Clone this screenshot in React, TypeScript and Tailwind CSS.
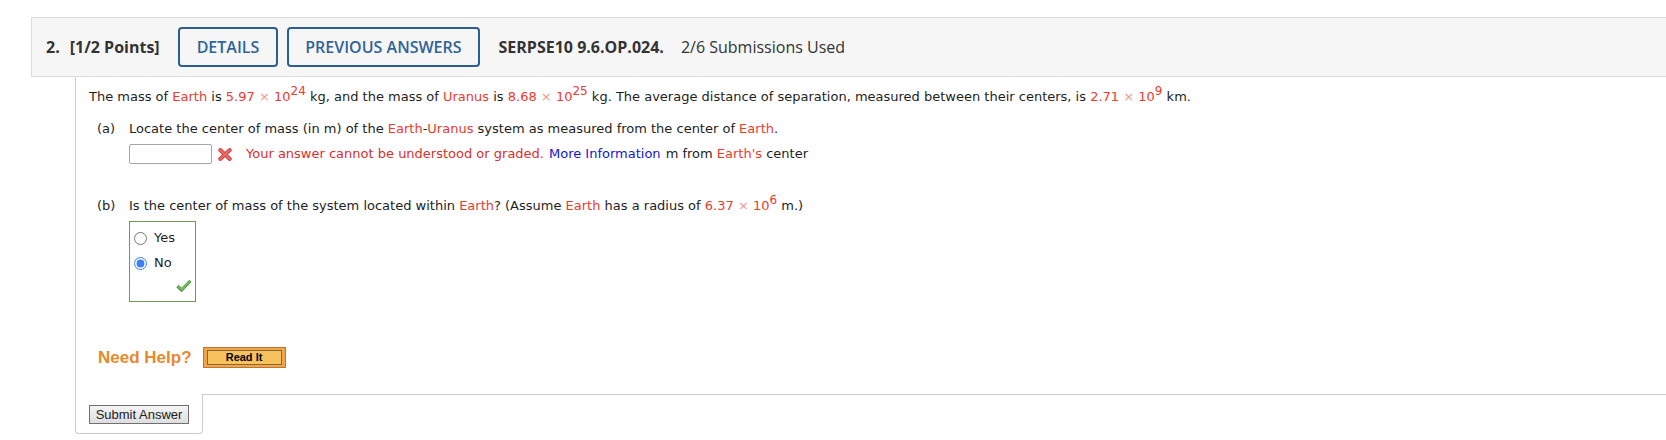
import React from "react";

const Red: React.FC<{ children: React.ReactNode }> = ({ children }) => (
  <span className="text-[#ec3b2f]">{children}</span>
);

const Sci: React.FC<{ m: string; e: string }> = ({ m, e }) => (
  <span className="text-[#ec3b2f]">
    {m} <span className="text-[#f29790]">×</span> 10
    <sup className="text-[12px] top-[-0.5em]">{e}</sup>
  </span>
);

const XMark = () => (
  <svg width="14" height="13" viewBox="0 0 14 13" className="shrink-0">
    <path d="M2.2 2 L11.8 11 M11.8 2 L2.2 11" stroke="#c9403d" strokeWidth="3.8" strokeLinecap="round" />
    <path d="M2.2 2 L11.8 11 M11.8 2 L2.2 11" stroke="#ec6a66" strokeWidth="2.2" strokeLinecap="round" />
  </svg>
);

const Check = () => (
  <svg width="16" height="13" viewBox="0 0 16 13">
    <path d="M1.5 7 L5.5 11 L14.5 1.8" fill="none" stroke="#4f9340" strokeWidth="3.2" strokeLinejoin="round" />
    <path d="M1.8 7 L5.5 10.6 L14.2 2" fill="none" stroke="#78bd62" strokeWidth="1.6" strokeLinejoin="round" />
  </svg>
);

export default function App() {
  return (
    <div className="w-[1666px] h-[440px] overflow-hidden bg-white pt-[17px] pl-[31px]">
      {/* question header */}
      <div className="w-[1660px] h-[60px] border border-[#dcdcdc] bg-[#f6f6f6] flex items-center pl-[14px] text-[16px] text-[#333] font-['Open_Sans',sans-serif]">
        <span className="font-bold">2.</span>
        <span className="font-bold ml-[10px]">[1/2 Points]</span>
        <button className="ml-[18px] h-[40px] px-[17px] border-2 border-[#2c5e90] rounded-[4px] text-[#2f6399] font-semibold">
          DETAILS
        </button>
        <button className="ml-[9px] h-[40px] px-[16px] border-2 border-[#2c5e90] rounded-[4px] text-[#2f6399] font-semibold">
          PREVIOUS ANSWERS
        </button>
        <span className="font-bold ml-[19px]">SERPSE10 9.6.OP.024.</span>
        <span className="ml-[17px]">2/6 Submissions Used</span>
      </div>

      {/* question body */}
      <div className="ml-[44px] w-[1620px] font-['DejaVu_Sans',sans-serif] text-[13px] text-[#1e1e1e]">
        <div className="border-l border-[#cccccc] pl-[13px] pt-[10px] pb-[26px]">
          <p className="leading-[20px]">
            The mass of <Red>Earth</Red> is <Sci m="5.97" e="24" /> kg, and the mass of <Red>Uranus</Red> is{" "}
            <Sci m="8.68" e="25" /> kg. The average distance of separation, measured between their centers, is{" "}
            <Sci m="2.71" e="9" /> km.
          </p>

          <div className="mt-[12px] pl-[8px] flex leading-[20px]">
            <span className="w-[32px] shrink-0">(a)</span>
            <div>
              <p>
                Locate the center of mass (in m) of the <Red>Earth</Red>-<Red>Uranus</Red> system as measured from the
                center of <Red>Earth</Red>.
              </p>
              <div className="mt-[5px] flex items-center">
                <input className="w-[83px] h-[20px] border border-[#a5a5a5] rounded-[2px] bg-white" />
                <span className="ml-[6px]">
                  <XMark />
                </span>
                <span className="ml-[14px] text-[#d8302d]">Your answer cannot be understood or graded.</span>
                <span className="ml-[5px] text-[#1515cf]">More Information</span>
                <span className="ml-[5px]">
                  m from <Red>Earth's</Red> center
                </span>
              </div>
            </div>
          </div>

          <div className="mt-[32px] pl-[8px] flex leading-[20px]">
            <span className="w-[32px] shrink-0">(b)</span>
            <div>
              <p>
                Is the center of mass of the system located within <Red>Earth</Red>? (Assume <Red>Earth</Red> has a
                radius of <Sci m="6.37" e="6" /> m.)
              </p>
              <div className="mt-[5px] w-[67px] h-[81px] border border-[#6f9a48] pl-[4px] pt-[9px] flex flex-col">
                <label className="flex items-center gap-[7px] h-[14px]">
                  <input type="radio" name="b" className="w-[13px] h-[13px] accent-[#3a7ff6]" />
                  <span>Yes</span>
                </label>
                <label className="flex items-center gap-[7px] h-[14px] mt-[11px]">
                  <input type="radio" name="b" defaultChecked className="w-[13px] h-[13px] accent-[#3a7ff6]" />
                  <span>No</span>
                </label>
                <div className="mt-[9px] ml-[42px]">
                  <Check />
                </div>
              </div>
            </div>
          </div>

          <div className="mt-[45px] pl-[9px] flex items-center h-[21px] font-['Liberation_Sans',sans-serif]">
            <span className="text-[17px] font-bold text-[#e8892d]">Need Help?</span>
            <div className="ml-[11px] w-[83px] h-[21px] border border-[#c17530] bg-[#eea54b] px-[3px] py-[2px]">
              <div className="h-full border border-[#8c6535] bg-[#f5c25e] flex items-center justify-center text-[11px] font-bold text-black leading-none">
                Read It
              </div>
            </div>
          </div>
        </div>

        <div className="flex">
          <div className="w-[128px] h-[40px] border-l border-b border-r border-[#cccccc] rounded-b-[4px] pl-[13px] pt-[11px]">
            <button className="w-[100px] h-[19px] border border-[#707070] bg-gradient-to-b from-[#f4f4f4] to-[#dedede] text-[13px] leading-none text-[#222] font-['Liberation_Sans',sans-serif]">
              Submit Answer
            </button>
          </div>
          <div className="flex-1 border-t border-[#cccccc]" />
        </div>
      </div>
    </div>
  );
}
